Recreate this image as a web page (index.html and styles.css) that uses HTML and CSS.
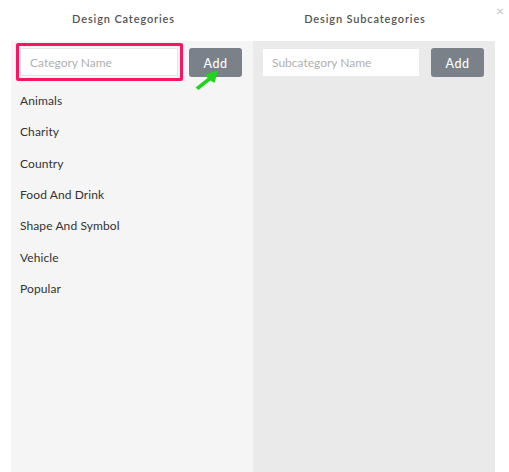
FILE: index.html
```html
<!DOCTYPE html>
<html>
<head>
<meta charset="utf-8">
<link rel="stylesheet" href="styles.css">
</head>
<body>
<div class="modal">
  <span class="close">×</span>
  <div class="heads">
    <div class="head">Design Categories</div>
    <div class="head">Design Subcategories</div>
  </div>
  <div class="panels">
    <div class="panel left">
      <div class="form">
        <div class="field">
          <input class="inp" type="text" placeholder="Category Name">
          <span class="hl"></span>
        </div>
        <button class="btn">Add</button>
        <svg class="arrow" width="26" height="22" viewBox="0 0 26 22">
          <polygon points="0.6,18.6 12.6,9.1 10,5.5 23,1.5 19.5,14 15.4,11.4 3.4,20.9" fill="#22d41e"/>
        </svg>
      </div>
      <ul class="list">
        <li>Animals</li>
        <li>Charity</li>
        <li>Country</li>
        <li>Food And Drink</li>
        <li>Shape And Symbol</li>
        <li>Vehicle</li>
        <li>Popular</li>
      </ul>
    </div>
    <div class="panel right">
      <div class="form">
        <div class="field sub">
          <input class="inp" type="text" placeholder="Subcategory Name">
        </div>
        <button class="btn">Add</button>
      </div>
    </div>
  </div>
</div>
</body>
</html>
```

FILE: styles.css
```css
html, body {
  margin: 0;
  padding: 0;
  background: #ffffff;
}
body {
  font-family: Lato, "Open Sans", sans-serif;
  width: 509px;
  height: 472px;
  overflow: hidden;
}
.modal {
  position: relative;
  width: 509px;
  height: 472px;
  display: flex;
  flex-direction: column;
}
.close {
  position: absolute;
  right: 5px;
  top: 2px;
  font-size: 14px;
  color: #c4c4c4;
  line-height: 18px;
}
.heads {
  display: flex;
  height: 41px;
  padding: 0 14px 0 0;
}
.head {
  width: 247px;
  text-align: center;
  font-size: 11px;
  font-weight: 600;
  color: #555555;
  letter-spacing: 0.85px;
  line-height: 38px;
}
.head + .head {
  width: 236px;
}
.panels {
  flex: 1;
  display: flex;
  margin: 0 14px 0 11px;
}
.panel {
  flex: 1;
}
.left {
  background: #f5f5f5;
}
.right {
  background: #eaeaea;
}
.form {
  position: relative;
  display: flex;
  align-items: flex-start;
  padding: 7px 11px 0 9px;
  gap: 11px;
}
.right .form {
  padding-left: 10px;
  gap: 12px;
}
.field {
  position: relative;
  width: 158px;
  height: 28px;
}
.field.sub {
  width: 156px;
  height: 27px;
  margin-top: 1px;
}
.inp {
  box-sizing: border-box;
  width: 100%;
  height: 100%;
  border: 1px solid #e6e6e6;
  background: #fff;
  padding: 0 9px;
  font-family: Lato, sans-serif;
  font-size: 12px;
  color: #333;
  outline: none;
}
.sub .inp {
  border: none;
  padding-left: 9px;
}
.inp::placeholder {
  color: #b0b0b0;
}
.hl {
  position: absolute;
  left: -4px;
  top: -5px;
  right: -5px;
  bottom: -5px;
  border: 3.5px solid #ff1463;
  border-radius: 2px;
}
.btn {
  width: 53px;
  height: 29px;
  border: none;
  border-radius: 3px;
  background: #7a8188;
  color: #ffffff;
  font-family: Lato, sans-serif;
  font-size: 12.5px;
  font-weight: 500;
  padding: 1px 0 0 0;
  letter-spacing: 0.5px;
}
.arrow {
  position: absolute;
  left: 184px;
  top: 28px;
}
.list {
  list-style: none;
  margin: 0;
  padding: 8px 0 0 9px;
}
.list li {
  height: 31.33px;
  line-height: 31.33px;
  font-size: 12px;
  color: #333333;
  letter-spacing: 0.1px;
}
```
